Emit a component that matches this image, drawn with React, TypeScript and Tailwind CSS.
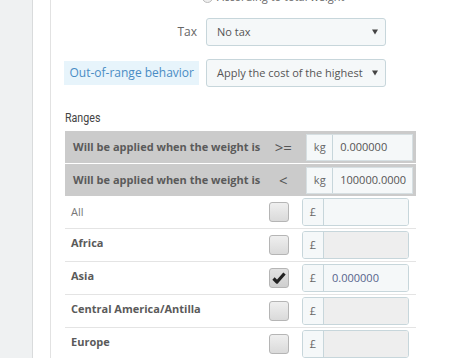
import React from "react";

const zones = [
  { name: "Africa", checked: false, value: "" },
  { name: "Asia", checked: true, value: "0.000000" },
  { name: "Central America/Antilla", checked: false, value: "" },
  { name: "Europe", checked: false, value: "" },
];

const Caret = () => (
  <span className="absolute right-[7px] top-1/2 -translate-y-1/2 border-x-[3.5px] border-t-[5px] border-x-transparent border-t-[#444]" />
);

const Select = ({ value }: { value: string }) => (
  <div className="relative flex h-[28px] w-[180px] items-center whitespace-nowrap rounded-[3px] border border-[#c7d6db] bg-[#f5f8f9] pl-[10px] text-[11px] text-[#555]">
    {value}
    <Caret />
  </div>
);

const Checkbox = ({ checked }: { checked?: boolean }) => (
  <div
    className={
      "flex h-[20px] w-[20px] items-center justify-center rounded-[3px] border border-[#b5b5b5] bg-gradient-to-b " +
      (checked ? "from-[#e2e2e2] to-[#cfcfcf]" : "from-[#efefef] to-[#dadada]")
    }
  >
    {checked && (
      <svg width="14" height="12" viewBox="0 0 14 12">
        <path d="M1.5 6.5 L5 10 L12.5 1.5" fill="none" stroke="#222" strokeWidth="3.2" strokeLinejoin="round" />
      </svg>
    )}
  </div>
);

const PriceInput = ({ disabled, value }: { disabled?: boolean; value?: string }) => (
  <div className="flex h-[28px] w-[107px] overflow-hidden rounded-[3px] border border-[#c7d6db] text-[11px]">
    <div className="flex w-[21px] items-center justify-center border-r border-[#c7d6db] bg-[#f5f8f9] text-[#666]">£</div>
    <div className={"flex flex-1 items-center pl-[8px] text-[#56648c] " + (disabled ? "bg-[#eeeeee]" : "bg-[#f5f8f9]")}>
      {value}
    </div>
  </div>
);

const WeightRow = ({ op, value }: { op: string; value: string }) => (
  <div className="grid h-[32px] grid-cols-[1fr_20px_107px] items-center gap-x-[13px] bg-[#cbcbcb] pl-[8px] pr-[7px]">
    <span className="whitespace-nowrap text-[11px] font-bold text-[#5a5a5a]">Will be applied when the weight is</span>
    <span className="whitespace-nowrap text-center text-[15px] leading-none text-[#555]">{op}</span>
    <div className="flex h-[27px] border border-[#d6dfe2] text-[11px]">
      <div className="flex w-[26px] items-center justify-center border-r border-[#c7d6db] bg-[#f5f8f9] text-[#666]">kg</div>
      <div className="flex flex-1 items-center whitespace-nowrap bg-[#f5f8f9] pl-[7px] text-[#555]">{value}</div>
    </div>
  </div>
);

export default function App() {
  return (
    <div
      className="flex h-[358px] w-[454px] overflow-hidden bg-white"
      style={{ fontFamily: '"Open Sans", sans-serif' }}
    >
      <div className="w-[33px] shrink-0 border-r border-[#d9dbdc] bg-[#eff1f2]" />
      <div className="w-[18px] shrink-0 border-r border-[#e2e2e2]" />
      <div className="flex-1 pl-[14px]">
        <div className="-mt-[13px] flex h-[20px] items-center gap-[4px] whitespace-nowrap pl-[137px] text-[11px] text-[#666]">
          <span className="h-[11px] w-[11px] rounded-full border border-[#bbb] bg-[#eee]" />
          <span>According to total weight</span>
        </div>

        <div className="mt-[11px] flex items-center">
          <label className="w-[134px] pr-[2px] text-right text-[12px] text-[#666]">Tax</label>
          <div className="ml-[7px]">
            <Select value="No tax" />
          </div>
        </div>

        <div className="mt-[13px] flex items-center">
          <div className="flex w-[134px] justify-end">
            <span className="whitespace-nowrap bg-[#e7f4fb] px-[5px] py-[3px] text-[12px] text-[#4a8cc4]">
              Out-of-range behavior
            </span>
          </div>
          <div className="ml-[7px]">
            <Select value="Apply the cost of the highest" />
          </div>
        </div>

        <div className="mt-[20px] h-[18px] leading-[18px]">
          <span
            className="inline-block origin-left scale-x-[0.82] text-[13px] text-[#444]"
            style={{ fontFamily: "Roboto, sans-serif" }}
          >
            Ranges
          </span>
        </div>

        <div className="mt-[6px] w-[351px]">
          <WeightRow op=">=" value="0.000000" />
          <div className="h-px bg-white" />
          <WeightRow op="<" value="100000.0000" />

          <div className="grid h-[33px] grid-cols-[1fr_20px_107px] items-center gap-x-[13px] border-b border-[#e4e4e4] pl-[6px] pr-[7px]">
            <span className="text-[11px] text-[#777]">All</span>
            <Checkbox />
            <PriceInput />
          </div>
          {zones.map((z) => (
            <div
              key={z.name}
              className="grid h-[33px] grid-cols-[1fr_20px_107px] items-center gap-x-[13px] border-b border-[#e4e4e4] pl-[6px] pr-[7px]"
            >
              <span className="-mt-[3px] whitespace-nowrap text-[11px] font-bold text-[#5a5a5a]">{z.name}</span>
              <Checkbox checked={z.checked} />
              <PriceInput disabled={!z.checked} value={z.value} />
            </div>
          ))}
        </div>
      </div>
    </div>
  );
}
